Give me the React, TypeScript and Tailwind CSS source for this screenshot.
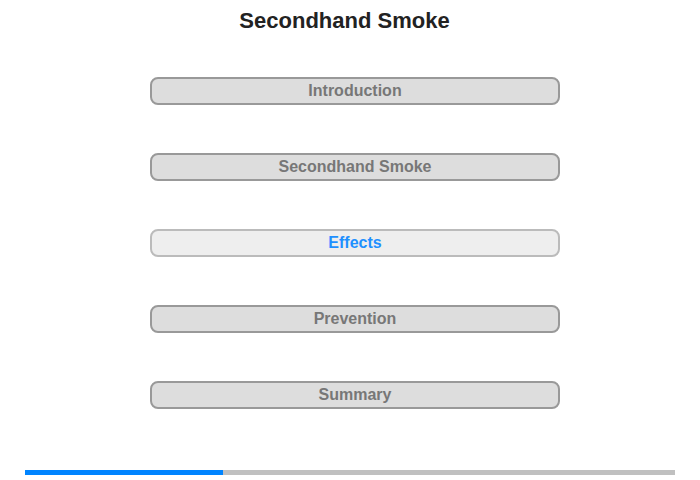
import React from "react";

const items = ["Introduction", "Secondhand Smoke", "Effects", "Prevention", "Summary"];

export default function App() {
  return (
    <div className="w-[700px] h-[480px] bg-white flex flex-col items-center" style={{ fontFamily: '"Liberation Sans", Arial, sans-serif' }}>
      <h1 className="mt-[8px] mr-[11px] text-[22px] leading-[26px] font-bold text-[#222]">Secondhand Smoke</h1>
      <div className="mt-[43px] ml-[10px] flex flex-col gap-[48px]">
        {items.map((t) => {
          const active = t === "Effects";
          return (
            <div
              key={t}
              className={
                active
                  ? "w-[410px] h-[28px] rounded-[8px] border-2 border-[#bbbbbb] bg-[#eeeeee] flex items-center justify-center text-[16px] font-bold text-[#1e90ff]"
                  : "w-[410px] h-[28px] rounded-[8px] border-2 border-[#999999] bg-[#dddddd] flex items-center justify-center text-[16px] font-bold text-[#777777]"
              }
            >
              {t}
            </div>
          );
        })}
      </div>
      <div className="mt-[61px] w-[650px] h-[5px] bg-[#c0c0c0] flex">
        <div className="w-[198px] h-full bg-[#0084ff]" />
      </div>
    </div>
  );
}
